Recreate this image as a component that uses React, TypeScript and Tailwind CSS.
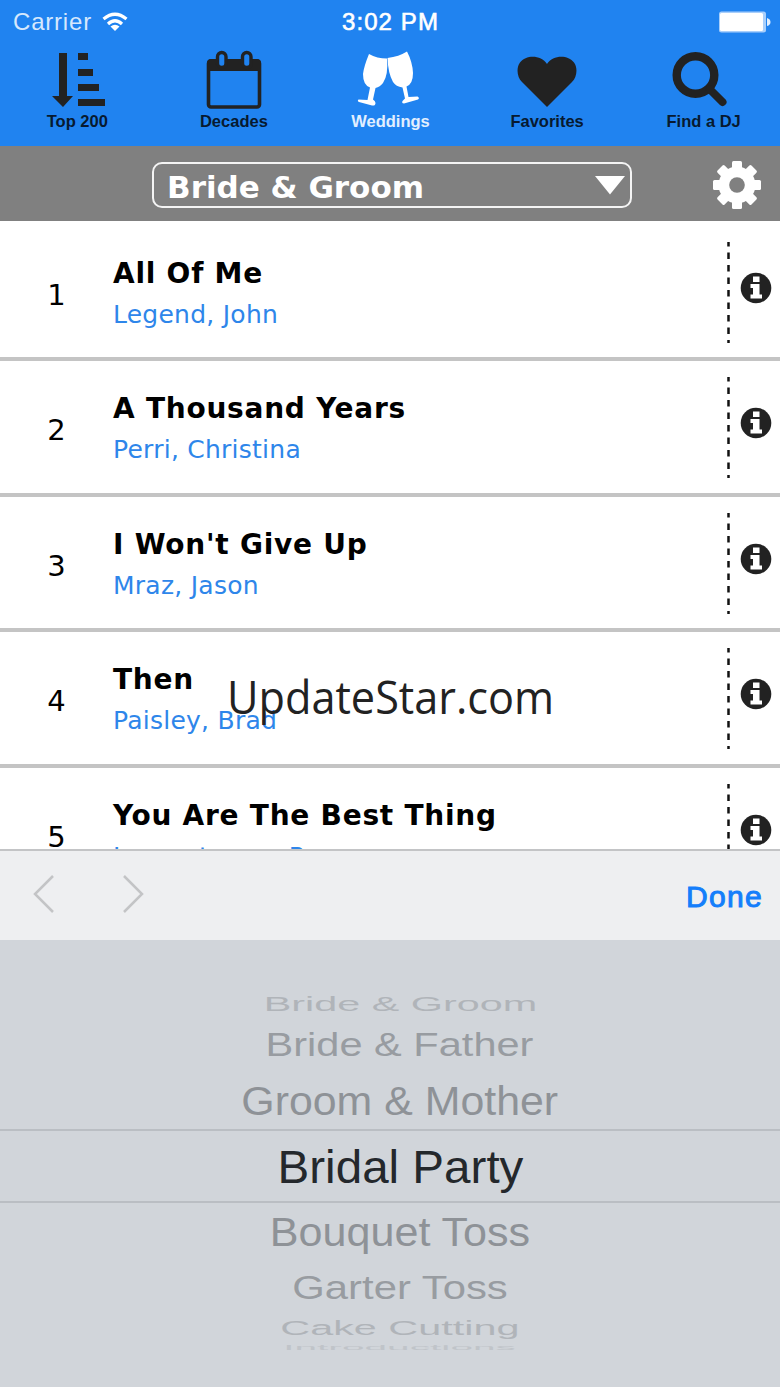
import * as React from 'react';

interface Song {
    title: string;
    artist: string;
}

const SONGS: Song[] = [
    { title: 'All Of Me', artist: 'Legend, John' },
    { title: 'A Thousand Years', artist: 'Perri, Christina' },
    { title: "I Won't Give Up", artist: 'Mraz, Jason' },
    { title: 'Then', artist: 'Paisley, Brad' },
    { title: 'You Are The Best Thing', artist: 'Lamontagne, Ray' },
];

const WHEEL = [
    { label: 'Bride & Groom', top: 'top-[34px]', style: 'text-[#b0b4b9] scale-x-[0.88] scale-y-[0.42]' },
    { label: 'Bride & Father', top: 'top-[75px]', style: 'text-[#989ca1] scale-x-[0.884] scale-y-[0.7]' },
    { label: 'Groom & Mother', top: 'top-[131px]', style: 'text-[#8e9297] scale-x-[0.912] scale-y-[0.87]' },
    { label: 'Bridal Party', top: 'top-[197px]', style: 'text-[#24282c] scale-x-[1.012]' },
    { label: 'Bouquet Toss', top: 'top-[262px]', style: 'text-[#8e9297] scale-x-[0.917] scale-y-[0.87]' },
    { label: 'Garter Toss', top: 'top-[318px]', style: 'text-[#989ca1] scale-x-[0.89] scale-y-[0.7]' },
    { label: 'Cake Cutting', top: 'top-[358px]', style: 'text-[#b0b4b9] scale-x-[0.88] scale-y-[0.42]' },
    { label: 'Introductions', top: 'top-[377px]', style: 'text-[#c0c4c9] scale-x-[0.865] scale-y-[0.16]' },
];

function SortIcon() {
    return (
        <svg width="56" height="60" viewBox="-2 0 56 60" fill="#222">
            <path d="M8 4h8v43h6L12 58 1 47h7z" />
            <path d="M27 4h10v7H27zM27 20h15v7H27zM27 35h21v7H27zM27 50h27v7H27z" />
        </svg>
    );
}

function CalendarIcon() {
    return (
        <svg width="56" height="60" viewBox="0 0 56 60" fill="none">
            <rect x="2.5" y="12" width="51" height="46" rx="2.5" stroke="#222" strokeWidth="3.6" />
            <path d="M1 22V14q0-4 4-4h46q4 0 4 4v8z" fill="#222" />
            <rect x="11.500" y="3.500" width="8.500" height="15" rx="4.2" fill="#2083f0" stroke="#222" strokeWidth="3.4" />
            <rect x="36.500" y="3.500" width="8.500" height="15" rx="4.2" fill="#2083f0" stroke="#222" strokeWidth="3.4" />
        </svg>
    );
}

function GlassesIcon() {
    return (
        <svg width="66" height="60" viewBox="0 0 66 60" fill="#fff">
            <path d="M12 5Q20 9.500 30 9.500Q31.500 26 26 34Q23 38 18.500 39L16 50.500Q18.500 52 18.500 54Q18.500 57 15 56.500L2 53Q0 52 1.500 50.500L10.500 51L13 38.500Q6 36 6 25Q7 17 12 5Z" />
            <path d="M30.500 9Q42 7.500 50 2.500Q55.500 13 56 24Q56 35 49.500 37.500L51.500 48L60.500 47.500Q63 49 61 50.500L47 54.500Q44.500 54.500 45.500 52L48 49.500L45.500 38.500Q39 37.500 36 33Q31 24 30.500 9Z" />
        </svg>
    );
}

function HeartIcon() {
    return (
        <svg width="60" height="60" viewBox="0 0 60 60" fill="#222">
            <path d="M30 58L5 33C0 28-1 19 3 13.500C9 5.500 24 5.500 30 15C36 5.500 51 5.500 57 13.500C61 19 60 28 55 33Z" />
        </svg>
    );
}

function SearchIcon() {
    return (
        <svg width="64" height="60" viewBox="0 0 64 60" fill="none" stroke="#222">
            <circle cx="23.500" cy="26" r="18.800" strokeWidth="8.400" />
            <path d="M38 40.500L50.500 53" strokeWidth="8" strokeLinecap="round" />
        </svg>
    );
}

const TABS = [
    { label: 'Top 200', icon: <SortIcon /> },
    { label: 'Decades', icon: <CalendarIcon /> },
    { label: 'Weddings', icon: <GlassesIcon />, active: true },
    { label: 'Favorites', icon: <HeartIcon /> },
    { label: 'Find a DJ', icon: <SearchIcon /> },
];

function StatusBar() {
    return (
        <div className="grid h-[44px] grid-cols-3 items-center pr-[9px] pl-[13px] text-[24px] text-white">
            <div className="flex items-center gap-[10px]">
                <span className="tracking-[0.8px] text-[#d6e8fd]">Carrier</span>
                <svg width="26" height="20" viewBox="0 0 26 20" fill="none" stroke="#fff" strokeWidth="3.2">
                    <path d="M1.500 7Q13-2.500 24.500 7M6 12Q13 5.500 20 12" />
                    <path d="M13 19L8.500 14.500Q13 11 17.500 14.500Z" fill="#fff" stroke="none" />
                </svg>
            </div>
            <span className="-ml-[3px] text-center tracking-[1.1px] [-webkit-text-stroke:0.6px_white]">3:02 PM</span>
            <svg className="justify-self-end" width="54" height="22" viewBox="0 0 54 22">
                <rect x="2" y="0.500" width="47" height="21" rx="2.500" fill="#a9cffb" />
                <rect x="3" y="2" width="43" height="18" rx="1.500" fill="#fff" />
                <path d="M50 7q3.500 1 3.500 4t-3.500 4z" fill="#e2effe" />
            </svg>
        </div>
    );
}

function GearIcon() {
    return (
        <svg width="50" height="50" viewBox="-25 -25 50 50">
            <g fill="#fff">
                <circle r="18.500" />
                {[0, 45, 90, 135].map((angle) => (
                    <rect key={angle} x="-5" y="-24" width="10" height="48" rx="1.500" transform={`rotate(${angle})`} />
                ))}
            </g>
            <circle r="7.800" fill="#808080" />
        </svg>
    );
}

function InfoIcon() {
    return (
        <svg width="32" height="32" viewBox="0 0 32 32">
            <circle cx="16" cy="16" r="15.300" fill="#222" />
            <path d="M13 4.500h6.500v5.500H13zM10.500 12h9v10.500h2.500v4H10.500v-4H13v-6.500h-2.500z" fill="#fff" />
        </svg>
    );
}

function SongRow({ song, index }: { song: Song; index: number }) {
    return (
        <li className="flex h-[135.5px] shrink-0 border-b-4 border-[#c4c4c4]">
            <span className="w-[113px] pt-[49px] text-center text-[29px] leading-[40px]">{index}</span>
            <div className="flex-1 pt-[31px]">
                <h3 className="text-[28px] leading-[34px] font-bold tracking-[0.75px] whitespace-nowrap">{song.title}</h3>
                <p className="mt-[6px] text-[25px] leading-[36px] tracking-[0.25px] text-[#2e86ea]">{song.artist}</p>
            </div>
            <svg className="mt-[16px]" width="3" height="101" viewBox="0 0 3 101">
                <path d="M1.500 0V101" stroke="#111" strokeWidth="2.500" strokeDasharray="6.500 6" strokeDashoffset="2" />
            </svg>
            <div className="ml-[10px] w-[40px] pt-[46px]">
                <InfoIcon />
            </div>
        </li>
    );
}

export default function App() {
    return (
        <div className="relative flex h-[1387px] w-[780px] flex-col overflow-hidden bg-white font-['Liberation_Sans',sans-serif]">
            <header className="h-[146px] bg-[#2083f0]">
                <StatusBar />
                <nav className="-ml-px flex">
                    {TABS.map((tab) => (
                        <div key={tab.label} className="flex w-[156.6px] shrink-0 flex-col items-center">
                            <div className="mt-[5px] h-[60px]">{tab.icon}</div>
                            <span className={tab.active ? 'text-[16.5px] leading-[25px] font-bold text-[#e2efff]' : 'text-[16.5px] leading-[25px] font-bold text-[#071a30]'}>
                                {tab.label}
                            </span>
                        </div>
                    ))}
                </nav>
            </header>

            <div className="flex h-[75px] items-center bg-[#808080] pt-[2px] pl-[152px] font-['DejaVu_Sans',sans-serif]">
                <div className="flex h-[46px] w-[480px] items-center justify-between rounded-[10px] border-2 border-[#f4f4f4] pr-[4px] pl-[13px]">
                    <span className="pt-[5px] text-[31px] leading-none font-bold text-white">Bride &amp; Groom</span>
                    <svg width="32" height="20" viewBox="0 0 32 20" fill="#fff">
                        <path d="M1 1H31L16 19.500Z" />
                    </svg>
                </div>
                <div className="ml-[80px]">
                    <GearIcon />
                </div>
            </div>

            <ul className="flex h-[628px] flex-col overflow-hidden pt-[4.5px] font-['DejaVu_Sans',sans-serif] text-black">
                {SONGS.map((song, i) => (
                    <SongRow key={song.title} song={song} index={i + 1} />
                ))}
            </ul>

            <div className="flex h-[91px] items-center justify-between border-t-2 border-[#c3c4c6] bg-[#eeeff1] pr-[17px] pl-[33px]">
                <div className="flex gap-[65px] pb-[4px]">
                    <svg width="23" height="38" viewBox="0 0 23 38" fill="none" stroke="#c3c4c6" strokeWidth="2.500">
                        <path d="M20 1L2 19L20 37" />
                    </svg>
                    <svg width="23" height="38" viewBox="0 0 23 38" fill="none" stroke="#c3c4c6" strokeWidth="2.500">
                        <path d="M3 1L21 19L3 37" />
                    </svg>
                </div>
                <span className="pt-[2px] text-[30px] tracking-[1.3px] text-[#147efb] [-webkit-text-stroke:1px_#147efb]">Done</span>
            </div>

            {/* Wheel rows overlap as they curve away from the centre */}
            <div className="relative flex-1 overflow-hidden bg-[#d1d5da]">
                <div className="absolute inset-x-0 top-[189px] h-[74px] border-y-2 border-[#babec3]" />
                {WHEEL.map((item) => (
                    <div key={item.label} className={`absolute right-0 left-[20px] flex justify-center ${item.top}`}>
                        <span className={`text-[47px] leading-[60px] whitespace-nowrap ${item.style}`}>{item.label}</span>
                    </div>
                ))}
            </div>

            <div className="absolute top-[664px] left-[227px] origin-left scale-x-[0.94] font-['Open_Sans',sans-serif] text-[46px] leading-[64px] text-[#222]">
                UpdateStar.com
            </div>
        </div>
    );
}
